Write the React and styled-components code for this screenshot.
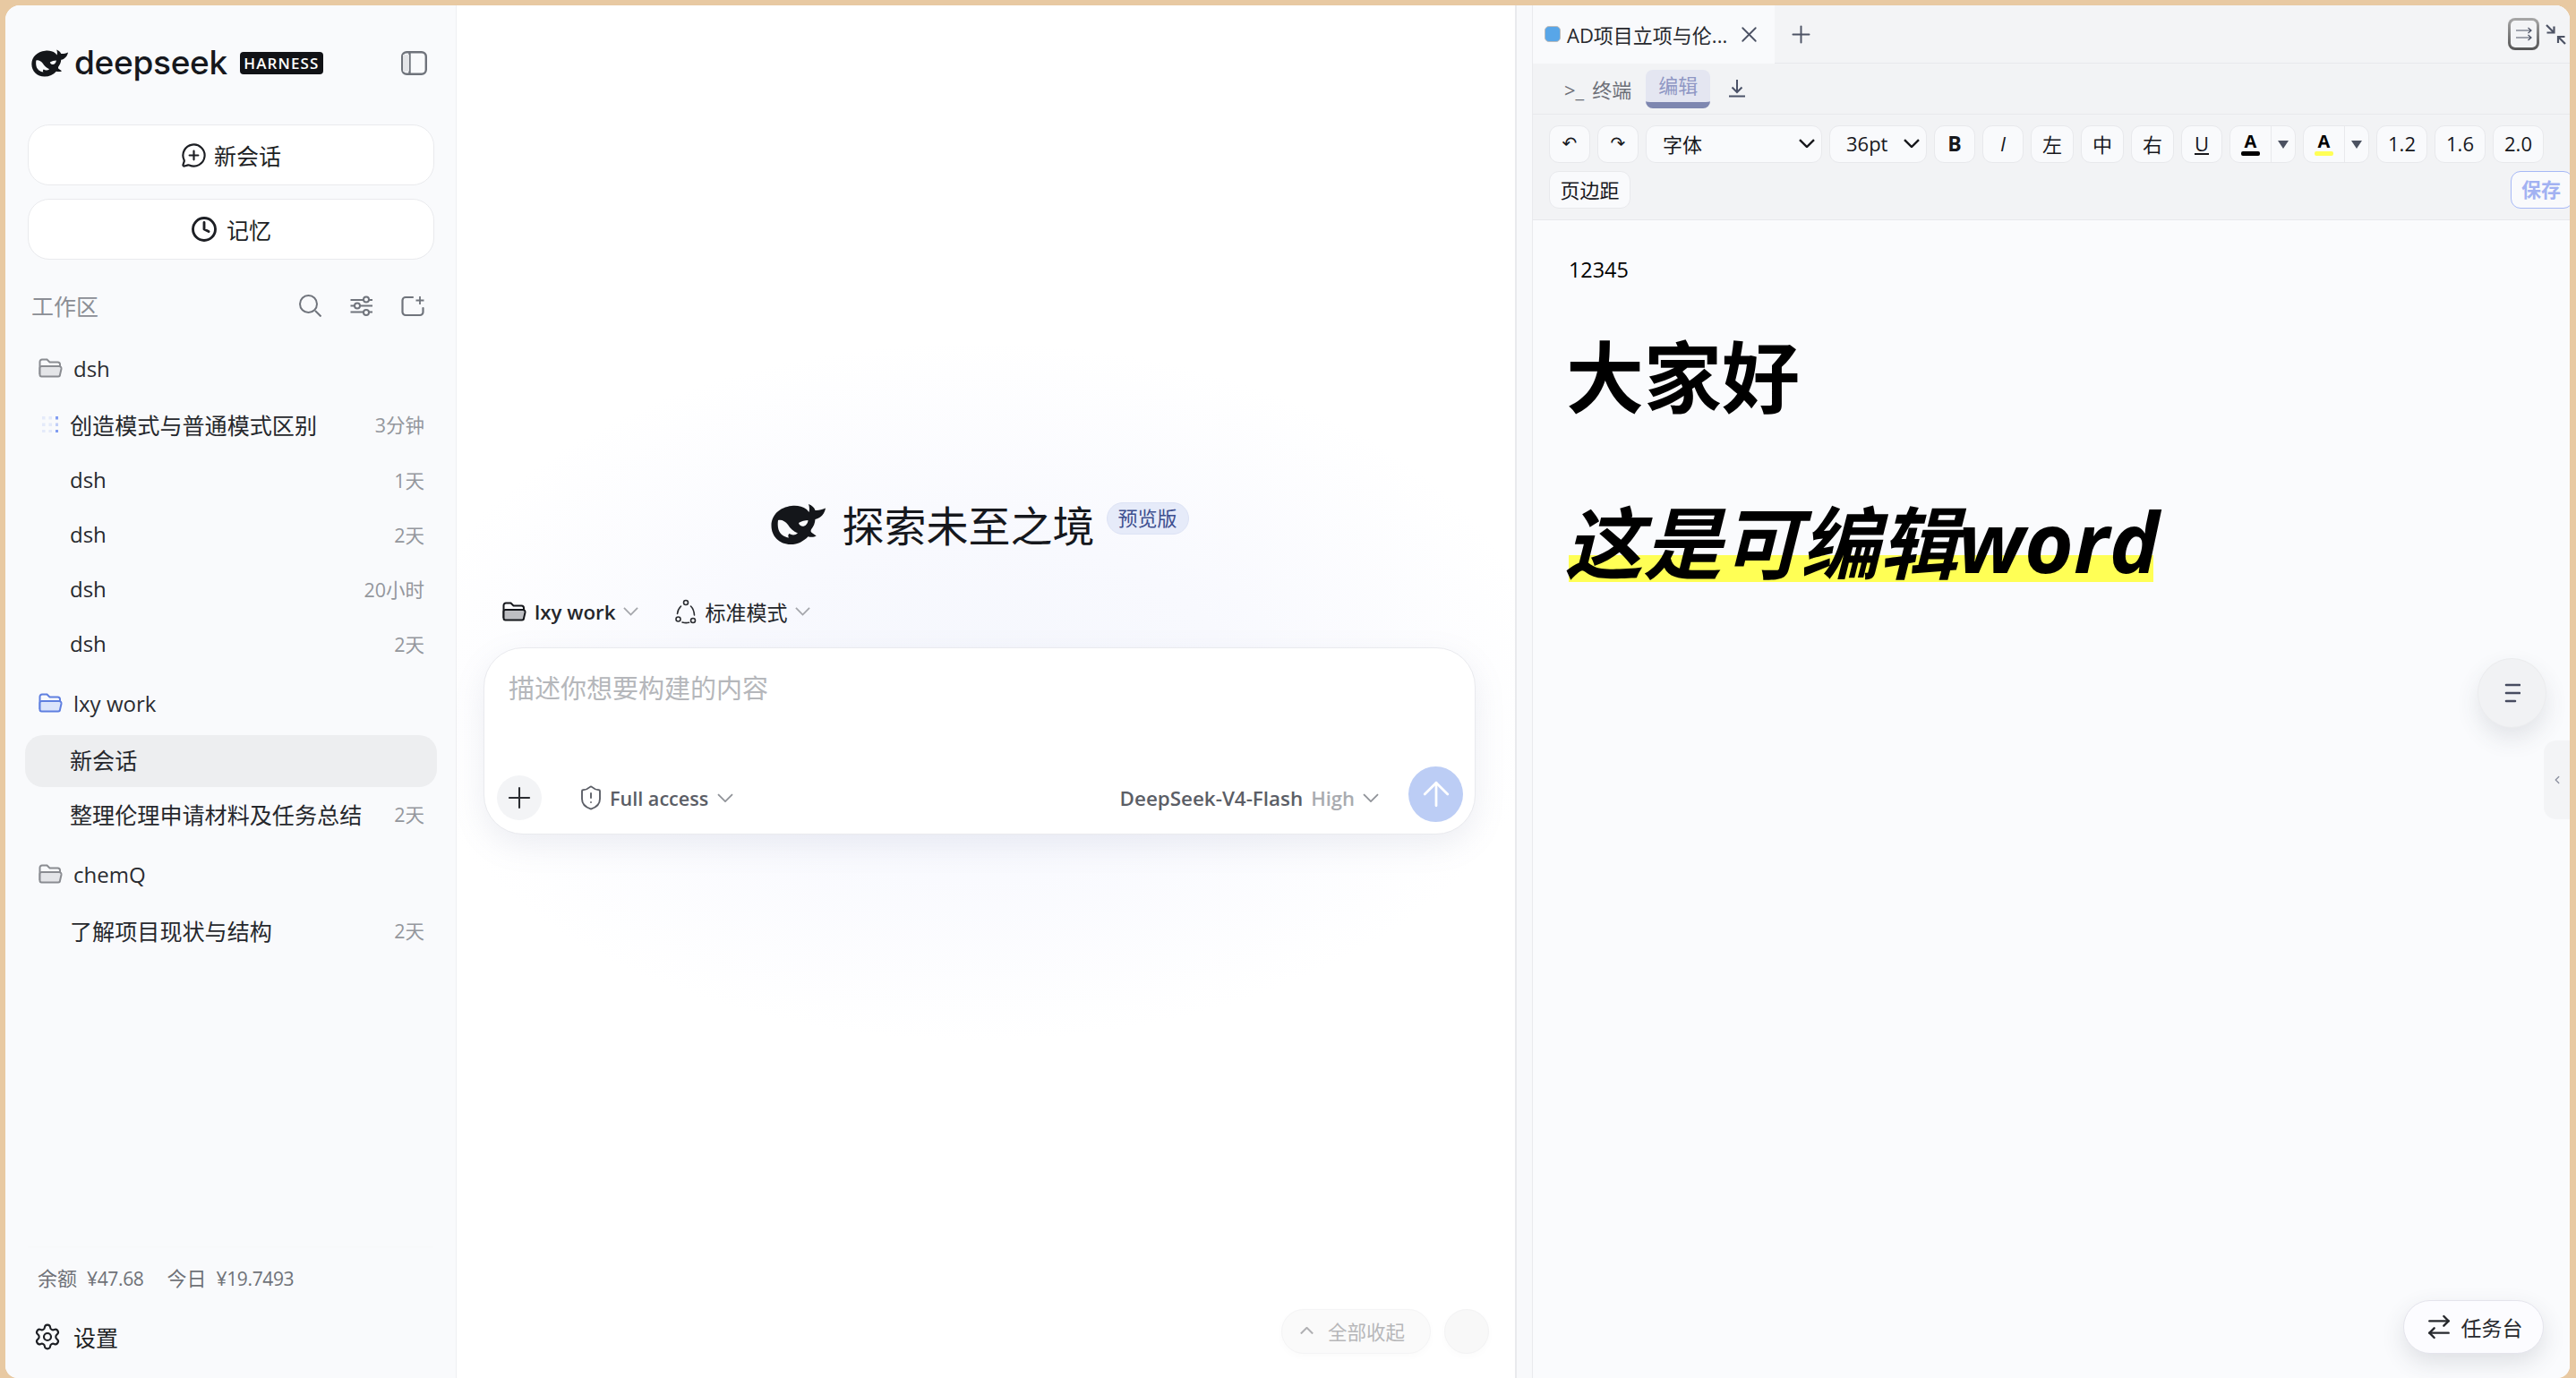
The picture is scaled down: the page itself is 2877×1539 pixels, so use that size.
import styled, { createGlobalStyle } from 'styled-components'
import {
  MessageCirclePlus, Clock, Settings, Plus, ChevronLeft,
  ShieldAlert, ArrowUp, X, ArrowRightLeft,
} from 'lucide-react'

const Global = createGlobalStyle`
  html, body { margin: 0; height: 100%; overflow: hidden; background: #e8c9a2; }
  #root { height: 100%; }
  * { box-sizing: border-box; }
  body { font-family: "Open Sans", "Noto Sans CJK SC", sans-serif; color: #1d1f24; }
`

const Frame = styled.div`
  display: flex;
  height: calc(100vh - 6px);
  margin: 6px 7px 0 6px;
  border-radius: 16px 16px 14px 14px;
  overflow: hidden;
  background: #fff;
`

/* sidebar */
const Sidebar = styled.aside`
  width: 504px;
  flex: none;
  display: flex;
  flex-direction: column;
  background: #f9fafc;
  border-right: 1px solid #eeeff2;
`
const Brand = styled.div`
  display: flex;
  align-items: center;
  justify-content: space-between;
  padding: 48px 32px 0 29px;
`
const BrandLeft = styled.div`
  display: flex;
  align-items: center;
`
const Wordmark = styled.span`
  margin-left: 7px;
  font-family: Inter, sans-serif;
  font-size: 37px;
  line-height: 32px;
  font-weight: 500;
  letter-spacing: -0.3px;
  color: #16181d;
`
const Harness = styled.span`
  margin-left: 14px;
  width: 93px;
  height: 25px;
  border-radius: 4px;
  background: #111216;
  color: #fff;
  font-size: 17px;
  font-weight: 600;
  letter-spacing: 1.1px;
  line-height: 25px;
  text-align: center;
`
const Actions = styled.div`
  margin-top: 53px;
  padding: 0 24px 0 25px;
  display: flex;
  flex-direction: column;
  gap: 15px;
`
const ActionButton = styled.button`
  height: 68px;
  display: flex;
  align-items: center;
  justify-content: center;
  gap: ${p => p.$gap}px;
  background: #fff;
  border: 1px solid #e9eaed;
  border-radius: 24px;
  font: inherit;
  font-size: 25px;
  color: #1d1f24;
`
const SectionHead = styled.div`
  margin-top: 37px;
  height: 30px;
  padding: 0 34px 2px 29px;
  display: flex;
  align-items: center;
  justify-content: space-between;
  color: #8b8e95;
  font-size: 25px;
`
const SectionIcons = styled.div`
  display: flex;
  align-items: center;
  gap: 32px;
  color: #70747c;
`
const Tree = styled.div`
  margin-top: 26px;
  padding: 0 21px 0 22px;
  display: flex;
  flex-direction: column;
  gap: 8px;
`
const Group = styled.div`
  display: flex;
  flex-direction: column;
  gap: 3px;
`
const FolderRow = styled.div`
  height: 58px;
  margin-bottom: 3px;
  padding: 0 0 1px 15px;
  display: flex;
  align-items: center;
  gap: 12px;
  font-size: 24px;
  color: #2a2c31;
`
const Item = styled.div`
  height: 58px;
  padding: 0 14px ${p => (p.$latin ? 3 : 5)}px 19px;
  display: flex;
  align-items: center;
  border-radius: 20px;
  background: ${p => (p.$active ? '#edeef0' : 'transparent')};
  font-size: ${p => (p.$latin ? 24 : 25.1)}px;
  color: #26282d;
`
const Slot = styled.span`
  width: 31px;
  flex: none;
  display: flex;
  align-items: center;
`
const ItemTitle = styled.span`
  flex: 1;
  white-space: nowrap;
`
const Age = styled.span`
  font-size: 21.5px;
  color: #94979d;
`
const SideFoot = styled.div`
  margin-top: auto;
  padding: 0 25px 26px;
`
const Balance = styled.div`
  box-sizing: content-box;
  height: 30px;
  padding: 18px 0 0 11px;
  margin-bottom: 32px;
  border-top: 1px solid #f7f8f9;
  display: flex;
  align-items: center;
  gap: 26px;
  font-size: 22px;
  color: #6f7278;
`
const BalancePart = styled.span`
  display: flex;
  align-items: baseline;
  gap: 11px;
`
const Amount = styled.span`
  font-size: 21px;
  letter-spacing: -0.35px;
`
const SettingsRow = styled.div`
  height: 40px;
  padding-left: 6px;
  display: flex;
  align-items: center;
  gap: 13px;
  font-size: 25px;
`

/* center column */
const Main = styled.main`
  position: relative;
  flex: 1;
  min-width: 0;
  padding: 557px 44px 0 30px;
  border-right: 2px solid #e9eaed;
  background:
    radial-gradient(ellipse 640px 390px at 49% 50%, #f5f7fd 0%, #f8f9fe 45%, #fff 100%);
`
const Hero = styled.div`
  display: flex;
  align-items: flex-start;
  justify-content: center;
`
const Title = styled.h1`
  margin: 0 0 0 19px;
  font-size: 47px;
  line-height: 48px;
  font-weight: 400;
  color: #16181d;
`
const PreviewBadge = styled.span`
  margin: -2px 0 0 13px;
  width: 92px;
  height: 36px;
  border: 1px solid #dde3f5;
  border-radius: 18px;
  background: #e6ebf9;
  color: #3d4f8f;
  font-size: 22px;
  line-height: 33px;
  text-align: center;
`
const Selectors = styled.div`
  margin-top: 52px;
  height: 40px;
  padding-left: 21px;
  display: flex;
  align-items: center;
  gap: 41px;
`
const Selector = styled.div`
  display: flex;
  align-items: center;
  gap: 9px;
  font-size: ${p => p.$size}px;
  font-weight: ${p => p.$weight};
  color: #24262b;
`
const Composer = styled.div`
  margin-top: 20px;
  height: 209px;
  display: flex;
  flex-direction: column;
  background: #fff;
  border: 1px solid #e9eaee;
  border-radius: 44px;
  box-shadow: 0 12px 34px rgba(120, 130, 160, 0.13);
`
const Placeholder = styled.div`
  padding: 25px 27px 0;
  font-size: 29px;
  line-height: 40px;
  color: #b5b7bb;
`
const ComposerFoot = styled.div`
  margin-top: auto;
  padding: 0 13px 13px 14px;
  display: flex;
  align-items: flex-end;
`
const RoundPlus = styled.button`
  width: 50px;
  height: 50px;
  margin-bottom: 2px;
  padding: 0;
  border: 0;
  border-radius: 50%;
  display: flex;
  align-items: center;
  justify-content: center;
  background: #f3f4f6;
  color: #2a2c31;
`
const FootGroup = styled.div`
  height: 50px;
  margin: 0 ${p => p.$right || 0}px 2px ${p => p.$left};
  display: flex;
  align-items: center;
  font-size: 21.6px;
  font-weight: 600;
  color: #5b5e66;
`
const ModelName = styled.span`
  font-size: 22.4px;
`
const Muted = styled.span`
  margin: 0 9px 0 9px;
  font-size: 22px;
  color: #a9abb0;
`
const AccessGap = styled.span`
  width: 10px;
`
const Send = styled.button`
  width: 61px;
  height: 62px;
  padding: 0;
  border: 0;
  border-radius: 50%;
  display: flex;
  align-items: center;
  justify-content: center;
  background: #bccdf5;
  color: #fff;
`
const FloatRow = styled.div`
  position: absolute;
  right: 29px;
  bottom: 27px;
  display: flex;
  gap: 15px;
`
const CollapseAll = styled.div`
  width: 167px;
  height: 50px;
  padding: 0 0 2px 20px;
  border: 1px solid #f4f4f5;
  border-radius: 25px;
  background: #fafafa;
  box-shadow: 0 3px 10px rgba(0, 0, 0, 0.02);
  display: flex;
  align-items: center;
  gap: 16px;
  font-size: 21.5px;
  color: #b7b7b9;
`
const FloatCircle = styled.div`
  width: 50px;
  height: 50px;
  border: 1px solid #f3f3f4;
  border-radius: 50%;
  background: #f8f8f8;
  box-shadow: 0 3px 10px rgba(0, 0, 0, 0.02);
`
const Gutter = styled.div`
  width: 18px;
  flex: none;
  background: #f8f9fb;
  border-right: 1px solid #e9eaed;
`

/* right panel */
const Panel = styled.section`
  position: relative;
  width: 1158px;
  flex: none;
  display: flex;
  flex-direction: column;
  overflow: hidden;
  background: #fafbfd;
`
const TabBar = styled.div`
  height: 65px;
  flex: none;
  display: flex;
  align-items: stretch;
  background: #f3f4f6;
  border-bottom: 1px solid #e8e9ec;
`
const FileTab = styled.div`
  width: 270px;
  margin-bottom: -1px;
  padding: 0 0 1px 13px;
  display: flex;
  align-items: center;
  background: #f9fafc;
  font-size: 22px;
  color: #26282d;
`
const FileDot = styled.span`
  width: 18px;
  height: 18px;
  margin-right: 7px;
  border: 1px solid #bcbcbc;
  border-radius: 5px;
  background: #58a6e8;
`
const NewTab = styled.span`
  margin-left: 14px;
  display: flex;
  align-items: center;
  color: #4d5365;
`
const TabTools = styled.div`
  margin-left: auto;
  padding-right: 4px;
  display: flex;
  align-items: center;
  gap: 7px;
`
const DockToggle = styled.div`
  width: 35px;
  height: 36px;
  border: 3px solid transparent;
  border-radius: 8px;
  background:
    linear-gradient(#f3f4f6, #f3f4f6) padding-box,
    linear-gradient(#a8a8a8, #555) border-box;
  display: flex;
  align-items: center;
  justify-content: center;
`
const ViewBar = styled.div`
  height: 57px;
  flex: none;
  padding-left: 35px;
  display: flex;
  align-items: flex-start;
  background: #f2f3f5;
  border-bottom: 1px solid #e8e9ec;
`
const TermTab = styled.span`
  margin-top: 14px;
  display: flex;
  align-items: baseline;
  gap: 9px;
  font-size: 22px;
  line-height: 30px;
  color: #6d7078;
`
const EditTab = styled.span`
  margin: 7px 0 0 16px;
  width: 72px;
  height: 43px;
  border-radius: 8px;
  border-bottom: 7px solid #7e87b0;
  background: #e4e6f1;
  font-size: 22px;
  line-height: 34px;
  text-align: center;
  color: #8f97c4;
`
const DownloadIcon = styled.span`
  margin: 18px 0 0 21px;
  display: flex;
`
const Toolbar = styled.div`
  flex: none;
  padding: 12px 18px 12px;
  display: flex;
  flex-wrap: wrap;
  gap: 9px 8px;
  background: #f2f3f5;
  border-bottom: 1px solid #e8e9ec;
`
const Tool = styled.div`
  width: ${p => p.$w || 46}px;
  height: 42px;
  display: flex;
  align-items: center;
  justify-content: ${p => (p.$between ? 'space-between' : 'center')};
  padding: ${p => (p.$between ? '0 7px 2px 18px' : '0 0 2px')};
  background: #f9fafc;
  border: 1px solid #e8e9ec;
  border-radius: 11px;
  font-size: ${p => (p.$bold ? 23 : 22)}px;
  color: #17181c;
  font-weight: ${p => (p.$bold ? 700 : 400)};
  font-style: ${p => (p.$italic ? 'italic' : 'normal')};
  text-decoration: ${p => (p.$under ? 'underline' : 'none')};
`
const Glyph = styled.span`
  font-family: "DejaVu Sans", sans-serif;
  font-size: 20px;
`
const SplitTool = styled.div`
  width: ${p => p.$w}px;
  height: 42px;
  display: flex;
  background: #f9fafc;
  border: 1px solid #e8e9ec;
  border-radius: 11px;
`
const SplitLeft = styled.div`
  flex: 1;
  display: flex;
  flex-direction: column;
  align-items: center;
  justify-content: center;
  border-right: 1px solid #e8e9ec;
  font-size: 20px;
  font-weight: 700;
  line-height: 20px;
  color: #000;
`
const Swatch = styled.span`
  width: 21px;
  height: 5px;
  margin-top: 1px;
  border-radius: 2px;
  background: ${p => p.$color};
`
const SplitRight = styled.div`
  width: 26px;
  display: flex;
  align-items: center;
  justify-content: center;
`
const Triangle = styled.span`
  width: 0;
  height: 0;
  border-left: 6px solid transparent;
  border-right: 6px solid transparent;
  border-top: 9px solid #4c5261;
`
const SaveButton = styled.div`
  width: 70px;
  height: 42px;
  margin: 0 -22px 0 auto;
  border: 1px solid #a6b8f6;
  border-radius: 11px;
  background: #f9fafc;
  color: #a2b2f2;
  font-size: 22px;
  font-weight: 700;
  line-height: 38px;
  padding-left: 11px;
`
const Page = styled.div`
  flex: 1;
  padding: 38px 0 0 40px;
  color: #000;
`
const Para = styled.p`
  margin: 0;
  font-size: 23.400px;
  line-height: 34px;
`
const Heading = styled.h2`
  margin: ${p => p.$top}px 0 0 ${p => (p.$italic ? -5 : -3)}px;
  font-size: ${p => (p.$italic ? 88 : 87)}px;
  line-height: 114px;
  font-weight: 700;
  font-style: ${p => (p.$italic ? 'italic' : 'normal')};
`
const Marked = styled.span`
  background: linear-gradient(#ffff55, #ffff55) no-repeat 5px 74px / calc(100% - 12px) 30px;
`
const BigLatin = styled.span`
  font-size: 94px;
`
const OutlineFab = styled.div`
  position: absolute;
  left: 1055px;
  top: 729px;
  width: 77px;
  height: 78px;
  border: 1px solid #ebecee;
  border-radius: 50%;
  background: #f1f2f4;
  box-shadow: 0 12px 26px rgba(60, 64, 80, 0.12);
  display: flex;
  align-items: center;
  justify-content: center;
`
const EdgeHandle = styled.div`
  position: absolute;
  right: 0;
  top: 821px;
  width: 29px;
  height: 88px;
  border-radius: 14px 0 0 14px;
  background: #f3f4f6;
  display: flex;
  align-items: center;
  justify-content: center;
  color: #8d91a0;
`
const TaskButton = styled.div`
  position: absolute;
  right: 29px;
  bottom: 27px;
  width: 157px;
  height: 60px;
  border: 1px solid #e4e4ec;
  border-radius: 30px;
  background: #fcfcff;
  box-shadow: 0 10px 26px rgba(60, 64, 80, 0.14);
  display: flex;
  align-items: center;
  justify-content: center;
  gap: 9px;
  font-size: 23px;
  color: #26282d;
`

function Whale({ w = 61, h = 45 }) {
  return (
    <svg width={w} height={h} viewBox="0 0 61 45" style={{ flex: 'none' }}>
      <path
        fill="#14161a"
        d="M0.500 24C0.500 12 10 3.500 23 2c6-.7 12 .3 17 4l2.500 3c.8-3 .6-6-.5-9 4 1.500 6.500 4 7.500 7 4 .3 7.500-.8 11.500-2.500-1 6-5 11-11.500 12.500-.3 4-1.800 8-4.300 11-1 1.500-.8 3 .5 4l5 3.500c-2.500 1.500-6 1.500-9.200.7C36.500 41.500 30 45 22 45 9.500 45 .5 36 .5 24z"
      />
      <path
        fill="#f9fafc"
        d="M8 18c4-1 8 1 11 5 2.500 4 6 7.500 11 9.500-3 2.500-6.500 2.500-9.500.5-1.500 1-1.500 3-.5 4.500-5-.5-10-4-11.500-9-1-3.500-1-7.500-.5-10.500z"
      />
      <path fill="#f9fafc" d="M31 21c3-2 7-3 10.500-3-.3 4-3 7-6.500 6.800-2-.3-3.500-1.800-4-3.800z" />
    </svg>
  )
}

function Chevron({ w = 18, color = '#a4a6ab', stroke = 1.800, up }) {
  const d = up ? 'M1 9l8-8 8 8' : 'M1 1l8 8 8-8'
  return (
    <svg width={w} height={w * 0.56} viewBox="0 0 18 10" fill="none" stroke={color} strokeWidth={stroke * 18 / w} style={{ flex: 'none' }}>
      <path d={d} />
    </svg>
  )
}

function FolderIcon({ stroke = '#8a8c91', fill = '#e4e5e8', size = 27 }) {
  return (
    <svg width={size} height={size * 0.82} viewBox="0 0 27 22" style={{ flex: 'none' }}>
      <path d="M1.500 18V4a2.500 2.500 0 0 1 2.500-2.500h5.500l3 3h9a2.500 2.500 0 0 1 2.500 2.500v2" fill="none" stroke={stroke} strokeWidth="2" />
      <path
        d="M1.500 18.500V11a2 2 0 0 1 2-2h19.500a2.500 2.500 0 0 1 2.500 3l-1.500 6.500a2 2 0 0 1-2 2H3.500a2 2 0 0 1-2-2z"
        fill={fill}
        stroke={stroke}
        strokeWidth="2"
        strokeLinejoin="round"
      />
    </svg>
  )
}

function PanelIcon() {
  return (
    <svg width="29" height="27" viewBox="0 0 29 27" fill="none" stroke="#6f737b" strokeWidth="2.400">
      <rect x="1.200" y="1.200" width="26.600" height="24.600" rx="5" />
      <path d="M9.500 1.500v24" />
      <path d="M2 4v19l7-.5V4z" fill="#e4e5e8" stroke="none" />
    </svg>
  )
}

function SearchIcon() {
  return (
    <svg width="25" height="25" viewBox="0 0 25 25" fill="none" stroke="currentColor" strokeWidth="2">
      <circle cx="10.500" cy="10.500" r="9.500" />
      <path d="M18 18l6.500 6.500" />
    </svg>
  )
}

function SlidersIcon() {
  return (
    <svg width="25" height="25" viewBox="0 0 25 25" fill="none" stroke="currentColor" strokeWidth="2">
      <path d="M0.500 6h15M21 6h4M0.500 12.500h5M11 12.500h14M0.500 19.500h15M21 19.500h4" />
      <circle cx="18" cy="5.500" r="3" />
      <circle cx="8" cy="12.500" r="3" />
      <circle cx="18" cy="20" r="3" />
    </svg>
  )
}

function FolderPlusIcon() {
  return (
    <svg width="27" height="25" viewBox="0 0 27 25" fill="none" stroke="currentColor" strokeWidth="2.200">
      <path d="M13 3H5a3.500 3.500 0 0 0-3.500 3.500v13A3.500 3.500 0 0 0 5 23h16a3.500 3.500 0 0 0 3.500-3.500V15" strokeLinecap="round" />
      <path d="M21 2v9M16.500 6.500h9" strokeWidth="1.800" />
    </svg>
  )
}

function PendingDots() {
  const cells = [0, 1, 2].flatMap(y => [0, 1, 2].map(x => [x, y]))
  return (
    <svg width="18" height="18" viewBox="0 0 18 18">
      {cells.map(([x, y]) => (
        <rect
          key={`${x}-${y}`}
          x={x * 7.500}
          y={y * 7.500}
          width="3.500"
          height="3.500"
          fill="#6d8cf0"
          opacity={x === 2 ? (y === 1 ? 0.4 : 0.85) : 0.14}
        />
      ))}
    </svg>
  )
}

function ModeIcon() {
  return (
    <svg width="24" height="28" viewBox="0 0 24 28" fill="none" stroke="#2a2c31" strokeWidth="1.600" strokeLinecap="round">
      <circle cx="12" cy="4" r="2.500" />
      <circle cx="3.500" cy="22.500" r="2.500" />
      <circle cx="20" cy="24" r="2.500" />
      <path d="M6.500 8Q3 11.500 2.500 16.500M17.500 8Q21 11.500 21.500 18M8 26q3.500 1 7.500.3" />
    </svg>
  )
}

function DockIcon() {
  return (
    <svg width="20" height="18" viewBox="0 0 20 18" fill="none" stroke="#4d5365" strokeWidth="1.200">
      <path d="M1 5h17M14.500 2l3.500 3-3.500 3M1 13h17M14.500 10l3.500 3-3.500 3" />
    </svg>
  )
}

function ShrinkIcon() {
  return (
    <svg width="23" height="23" viewBox="0 0 23 23" fill="none" stroke="#4d5365" strokeWidth="2.200">
      <path d="M1 1l8 8M9.500 2.500v7h-8" />
      <path d="M22 22l-7.500-7.500M14 21v-7h7.500" />
    </svg>
  )
}

function DownloadGlyph() {
  return (
    <svg width="18" height="20" viewBox="0 0 18 20" fill="none" stroke="#4b5268" strokeWidth="2">
      <path d="M9 0v13M3.500 8.500L9 14l5.500-5.500M0 18.500h18" />
    </svg>
  )
}

function OutlineGlyph() {
  return (
    <svg width="18" height="24" viewBox="0 0 18 24" fill="none" stroke="#474c60" strokeWidth="2.600" strokeLinecap="round">
      <path d="M2 3h15M2 12h15M2 21h10" />
    </svg>
  )
}

const tree = [
  {
    name: 'dsh',
    items: [
      { title: '创造模式与普通模式区别', age: '3分钟', busy: true },
      { title: 'dsh', age: '1天', latin: true },
      { title: 'dsh', age: '2天', latin: true },
      { title: 'dsh', age: '20小时', latin: true },
      { title: 'dsh', age: '2天', latin: true },
    ],
  },
  {
    name: 'lxy work',
    open: true,
    items: [
      { title: '新会话', active: true },
      { title: '整理伦理申请材料及任务总结', age: '2天' },
    ],
  },
  { name: 'chemQ', items: [{ title: '了解项目现状与结构', age: '2天' }] },
]

export default function App() {
  return (
    <>
      <Global />
      <Frame>
        <Sidebar>
          <Brand>
            <BrandLeft>
              <Whale w={41} h={31} />
              <Wordmark>deepseek</Wordmark>
              <Harness>HARNESS</Harness>
            </BrandLeft>
            <PanelIcon />
          </Brand>
          <Actions>
            <ActionButton $gap={8}>
              <MessageCirclePlus size={29} strokeWidth={1.800} />
              新会话
            </ActionButton>
            <ActionButton $gap={10}>
              <Clock size={30} strokeWidth={2.300} />
              记忆
            </ActionButton>
          </Actions>
          <SectionHead>
            工作区
            <SectionIcons>
              <SearchIcon />
              <SlidersIcon />
              <FolderPlusIcon />
            </SectionIcons>
          </SectionHead>
          <Tree>
            {tree.map(group => (
              <Group key={group.name}>
                <FolderRow>
                  {group.open
                    ? <FolderIcon stroke="#5f7fe0" fill="#dbe4fb" />
                    : <FolderIcon />}
                  {group.name}
                </FolderRow>
                {group.items.map((item, i) => (
                  <Item key={i} $active={item.active} $latin={item.latin}>
                    <Slot>{item.busy && <PendingDots />}</Slot>
                    <ItemTitle>{item.title}</ItemTitle>
                    {item.age && <Age>{item.age}</Age>}
                  </Item>
                ))}
              </Group>
            ))}
          </Tree>
          <SideFoot>
            <Balance>
              <BalancePart>余额<Amount>¥47.68</Amount></BalancePart>
              <BalancePart>今日<Amount>¥19.7493</Amount></BalancePart>
            </Balance>
            <SettingsRow>
              <Settings size={32} strokeWidth={1.600} />
              设置
            </SettingsRow>
          </SideFoot>
        </Sidebar>

        <Main>
          <Hero>
            <Whale />
            <Title>探索未至之境</Title>
            <PreviewBadge>预览版</PreviewBadge>
          </Hero>
          <Selectors>
            <Selector $weight={600} $size={22.300}>
              <FolderIcon stroke="#14161a" fill="#bdbec2" />
              lxy work
              <Chevron w={17} />
            </Selector>
            <Selector $weight={400} $size={23}>
              <ModeIcon />
              标准模式
              <Chevron w={17} />
            </Selector>
          </Selectors>
          <Composer>
            <Placeholder>描述你想要构建的内容</Placeholder>
            <ComposerFoot>
              <RoundPlus><Plus size={38} strokeWidth={1.300} /></RoundPlus>
              <FootGroup $left="40px">
                <ShieldAlert size={30} strokeWidth={1.500} style={{ marginRight: 6 }} />
                Full access
                <AccessGap />
                <Chevron color="#8f9298" />
              </FootGroup>
              <FootGroup $left="auto" $right={33}>
                <ModelName>DeepSeek-V4-Flash</ModelName>
                <Muted>High</Muted>
                <Chevron color="#8f9298" />
              </FootGroup>
              <Send><ArrowUp size={44} strokeWidth={1.500} /></Send>
            </ComposerFoot>
          </Composer>
          <FloatRow>
            <CollapseAll>
              <Chevron w={15} color="#b0b0b3" stroke={2} up />
              全部收起
            </CollapseAll>
            <FloatCircle />
          </FloatRow>
        </Main>
        <Gutter />

        <Panel>
          <TabBar>
            <FileTab>
              <FileDot />
              AD项目立项与伦...
              <X size={29} strokeWidth={1.500} color="#4d5365" style={{ marginLeft: 10 }} />
            </FileTab>
            <NewTab><Plus size={31} strokeWidth={1.500} /></NewTab>
            <TabTools>
              <DockToggle><DockIcon /></DockToggle>
              <ShrinkIcon />
            </TabTools>
          </TabBar>
          <ViewBar>
            <TermTab><span>&gt;_</span>终端</TermTab>
            <EditTab>编辑</EditTab>
            <DownloadIcon><DownloadGlyph /></DownloadIcon>
          </ViewBar>
          <Toolbar>
            <Tool><Glyph>↶</Glyph></Tool>
            <Tool><Glyph>↷</Glyph></Tool>
            <Tool $w={197} $between>字体<Chevron color="#17181c" stroke={2.400} /></Tool>
            <Tool $w={109} $between>36pt<Chevron color="#17181c" stroke={2.400} /></Tool>
            <Tool $bold>B</Tool>
            <Tool $italic>I</Tool>
            <Tool $w={48}>左</Tool>
            <Tool $w={48}>中</Tool>
            <Tool $w={48}>右</Tool>
            <Tool $under>U</Tool>
            <SplitTool $w={74}>
              <SplitLeft>A<Swatch $color="#000" /></SplitLeft>
              <SplitRight><Triangle /></SplitRight>
            </SplitTool>
            <SplitTool $w={74}>
              <SplitLeft>A<Swatch $color="#ffff55" /></SplitLeft>
              <SplitRight><Triangle /></SplitRight>
            </SplitTool>
            <Tool $w={57}>1.2</Tool>
            <Tool $w={57}>1.6</Tool>
            <Tool $w={57}>2.0</Tool>
            <Tool $w={91}>页边距</Tool>
            <SaveButton>保存</SaveButton>
          </Toolbar>
          <Page>
            <Para>12345</Para>
            <Heading $top={46}>大家好</Heading>
            <Heading $top={69} $italic>
              <Marked>这是可编辑<BigLatin>word</BigLatin></Marked>
            </Heading>
          </Page>
          <OutlineFab><OutlineGlyph /></OutlineFab>
          <EdgeHandle><ChevronLeft size={14} strokeWidth={2.400} /></EdgeHandle>
          <TaskButton>
            <ArrowRightLeft size={32} strokeWidth={1.800} />
            任务台
          </TaskButton>
        </Panel>
      </Frame>
    </>
  )
}
